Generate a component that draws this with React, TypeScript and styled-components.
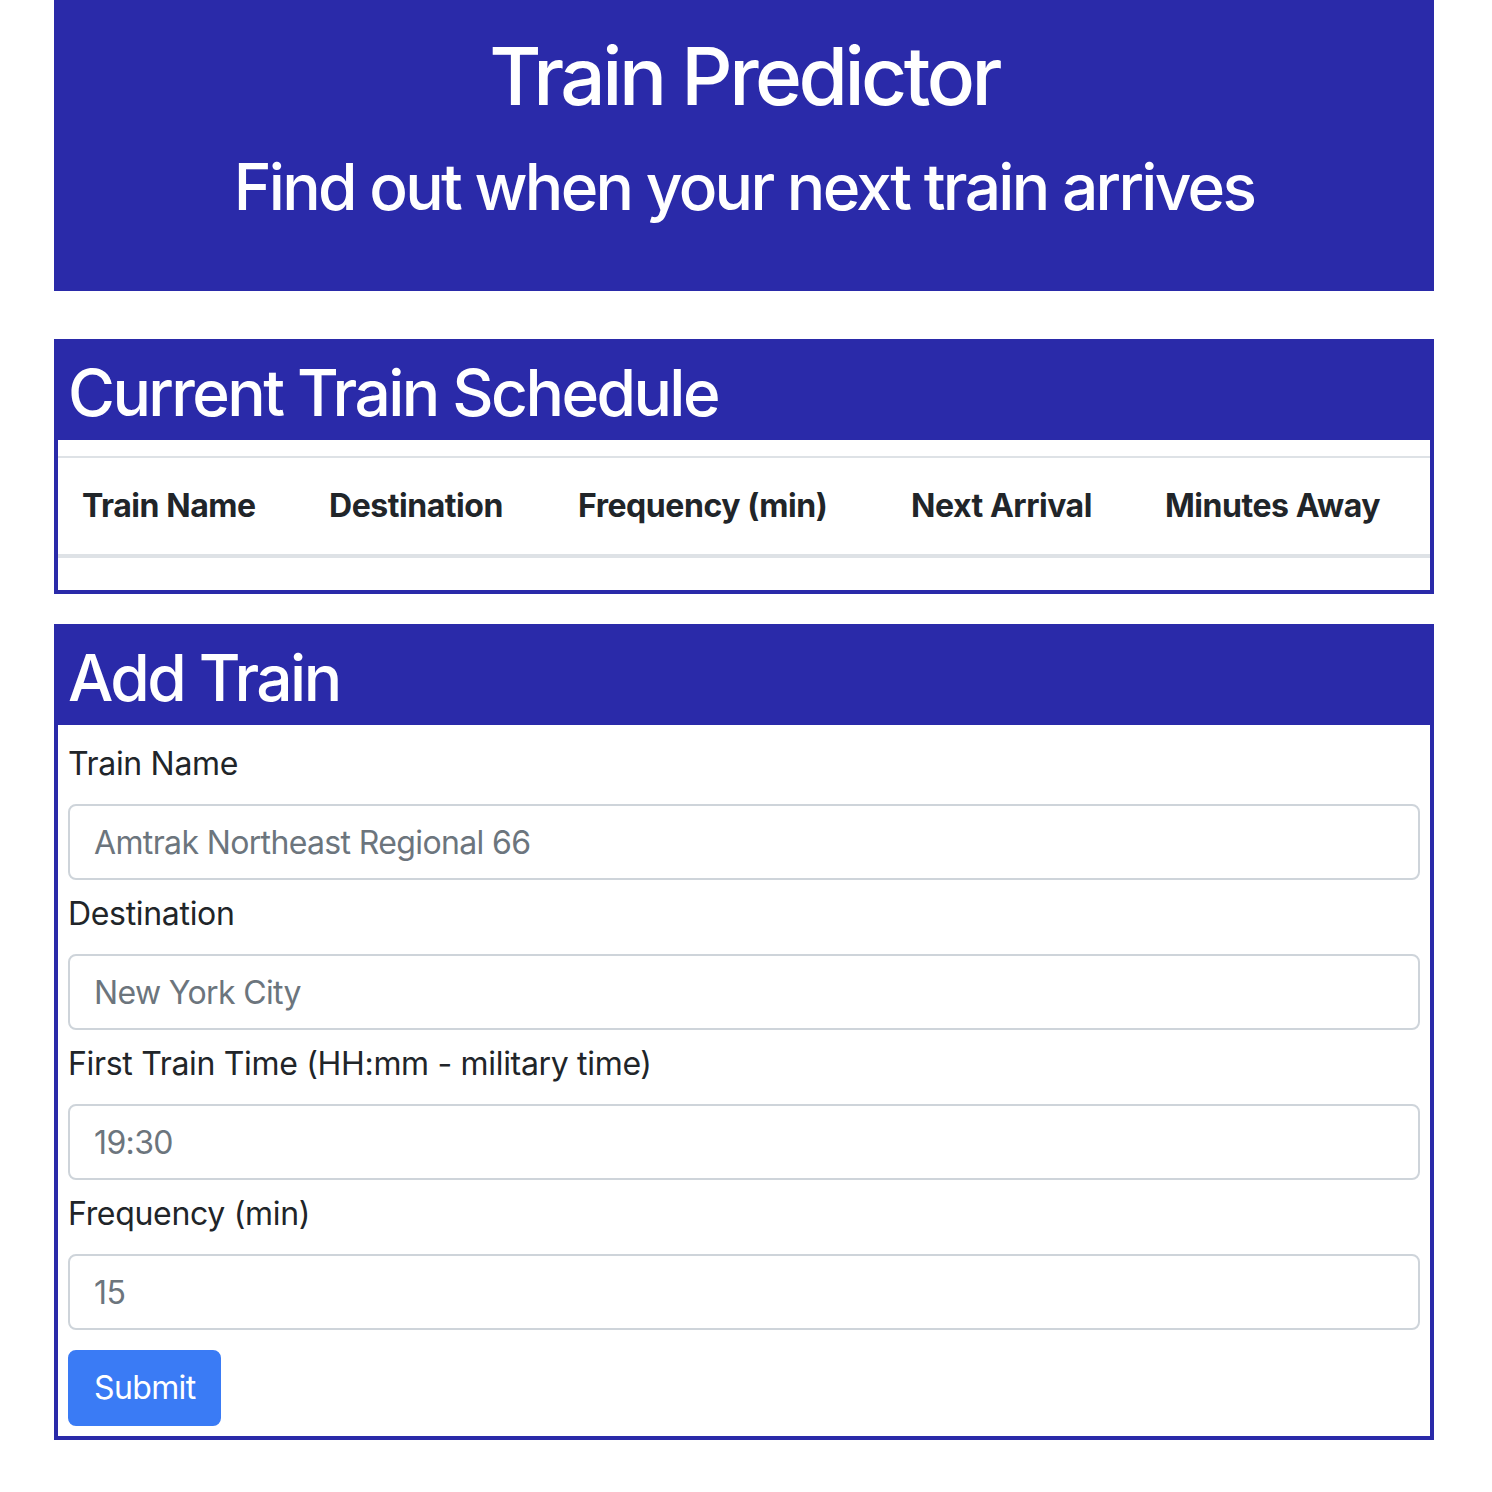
import React from 'react'
import styled, { createGlobalStyle } from 'styled-components'

const GlobalStyle = createGlobalStyle`
  body {
    margin: 0;
    background: #fff;
    font-family: Inter, 'Noto Sans', sans-serif;
    color: #212529;
    letter-spacing: -0.02em;
  }
  * {
    box-sizing: border-box;
  }
`

const BRAND = '#2a2aa9'

const Page = styled.div`
  width: 1380px;
  margin-left: 54px;
  padding-bottom: 52px;
`

const Jumbotron = styled.header`
  background: ${BRAND};
  color: #fff;
  text-align: center;
  padding: 28px 20px 66px;
  margin-bottom: 48px;
`

const Title = styled.h1`
  margin: 0 0 24px;
  font-size: 80px;
  font-weight: 500;
  line-height: 96px;
  letter-spacing: -0.044em;
`

const Lead = styled.h2`
  margin: 0;
  font-size: 64px;
  font-weight: 500;
  line-height: 77px;
  letter-spacing: -0.042em;
`

const Card = styled.section<{ $gap?: number }>`
  border: 4px solid ${BRAND};
  margin-bottom: ${(p) => p.$gap ?? 0}px;
`

const CardHeader = styled.h2`
  margin: 0;
  background: ${BRAND};
  color: #fff;
  font-size: 64px;
  font-weight: 500;
  line-height: 77px;
  letter-spacing: -0.04em;
  padding: 11px 10px 9px;
`

const Table = styled.table`
  width: 100%;
  table-layout: fixed;
  border-collapse: collapse;
  margin: 16px 0 32px;
`

const Th = styled.th<{ $w: number }>`
  width: ${(p) => p.$w}px;
  text-align: left;
  font-size: 32px;
  font-weight: 700;
  line-height: 48px;
  letter-spacing: -0.014em;
  padding: 24px;
  border-top: 2px solid #dee2e6;
  border-bottom: 4px solid #dee2e6;
  white-space: nowrap;
`

const Form = styled.form`
  padding: 15px 10px 10px;
`

const Group = styled.div`
  margin-bottom: 10px;
`

const Label = styled.label`
  display: block;
  font-size: 32px;
  line-height: 48px;
  margin-bottom: 16px;
`

const Input = styled.input`
  display: block;
  width: 100%;
  height: 76px;
  padding: 12px 24px;
  font-family: inherit;
  font-size: 32px;
  line-height: 48px;
  letter-spacing: -0.02em;
  color: #495057;
  border: 2px solid #ced4da;
  border-radius: 8px;
  outline: none;
  &::placeholder {
    color: #6c757d;
    opacity: 1;
  }
`

const SubmitButton = styled.button`
  margin-top: 10px;
  height: 76px;
  padding: 12px 24px;
  font-family: inherit;
  font-size: 32px;
  line-height: 48px;
  letter-spacing: -0.02em;
  color: #fff;
  background: #3a7bf5;
  border: 2px solid #3a7bf5;
  border-radius: 8px;
  cursor: pointer;
`

const columns = [
  { label: 'Train Name', w: 247 },
  { label: 'Destination', w: 249 },
  { label: 'Frequency (min)', w: 333 },
  { label: 'Next Arrival', w: 254 },
  { label: 'Minutes Away', w: 289 },
]

const fields = [
  { id: 'train-name', label: 'Train Name', placeholder: 'Amtrak Northeast Regional 66' },
  { id: 'destination', label: 'Destination', placeholder: 'New York City' },
  { id: 'first-train', label: 'First Train Time (HH:mm - military time)', placeholder: '19:30' },
  { id: 'frequency', label: 'Frequency (min)', placeholder: '15' },
]

export default function App() {
  return (
    <>
      <GlobalStyle />
      <Page>
        <Jumbotron>
          <Title>Train Predictor</Title>
          <Lead>Find out when your next train arrives</Lead>
        </Jumbotron>

        <Card $gap={30}>
          <CardHeader>Current Train Schedule</CardHeader>
          <Table>
            <thead>
              <tr>
                {columns.map((c) => (
                  <Th key={c.label} $w={c.w}>
                    {c.label}
                  </Th>
                ))}
              </tr>
            </thead>
            <tbody />
          </Table>
        </Card>

        <Card>
          <CardHeader>Add Train</CardHeader>
          <Form onSubmit={(e) => e.preventDefault()}>
            {fields.map((f) => (
              <Group key={f.id}>
                <Label htmlFor={f.id}>{f.label}</Label>
                <Input id={f.id} type="text" placeholder={f.placeholder} />
              </Group>
            ))}
            <SubmitButton type="submit">Submit</SubmitButton>
          </Form>
        </Card>
      </Page>
    </>
  )
}
